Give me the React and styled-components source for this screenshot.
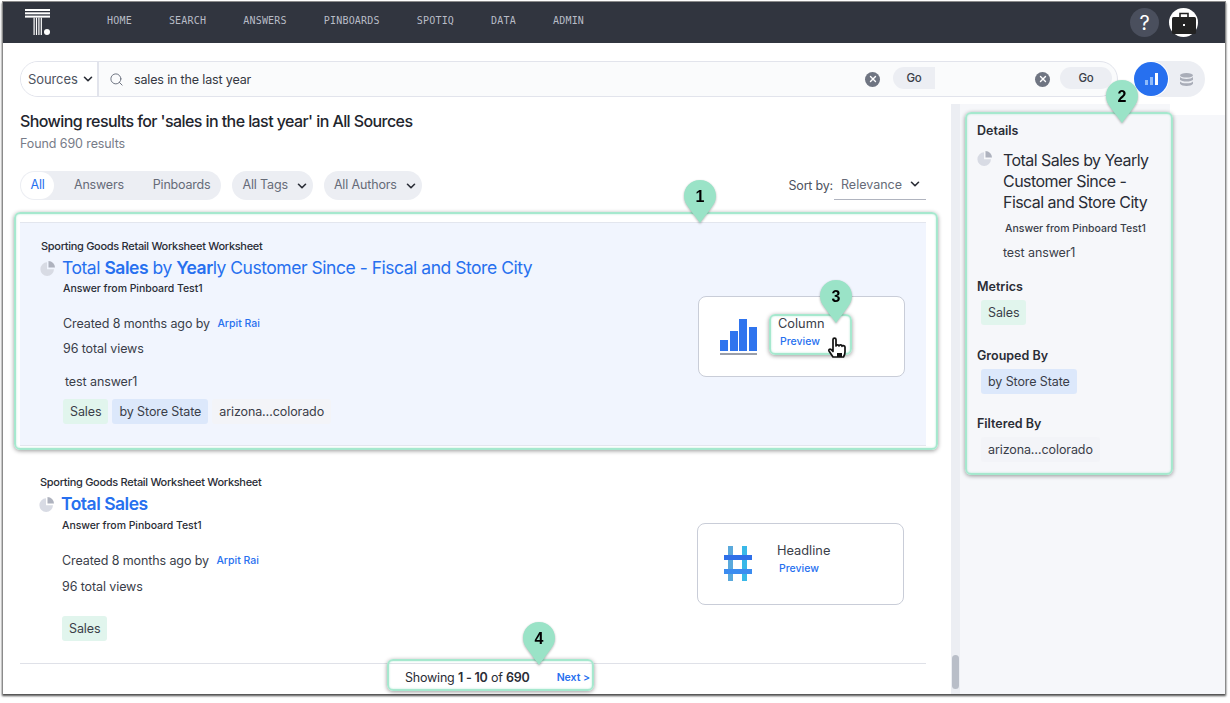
import React from "react";
import styled, { createGlobalStyle } from "styled-components";
import { ChevronDown, Search, X } from "lucide-react";

const Global = createGlobalStyle`
  html, body { margin: 0; padding: 0; background: #fff; }
  body { font-family: Inter, "Noto Sans", sans-serif; color: #2a2d36; }
  * { box-sizing: border-box; }
`;

const Page = styled.div`position: relative; width: 1230px; height: 703px; overflow: hidden; background: #fff; padding: 1px 0 0 2px;`;
const Frame = styled.div`
  width: 1224px; height: 693px; border: 1px solid #8b8b8b; border-bottom: 0; background: #fff;
  box-shadow: 0 2px 2px rgba(0,0,0,.7); display: flex; flex-direction: column; overflow: hidden;
`;
const Nav = styled.nav`height: 41px; flex: none; background: #31353f; display: flex; align-items: center; padding: 0 27px 0 22px;`;
const NavList = styled.div`display: flex; gap: 37px; margin-left: 55px; flex: 1;`;
const NavItem = styled.span`font: 10px "DejaVu Sans Mono", monospace; letter-spacing: .2px; color: #b8bcc6; position: relative; top: -2px;`;
const LogoBox = styled.div`display: flex;`;
const HelpBtn = styled.div`width: 29px; height: 29px; border-radius: 50%; background: #4a4f5d; color: #fff; display: flex; align-items: center; justify-content: center; font-size: 20px; font-weight: 400; margin-right: 10px;`;
const Avatar = styled.div`width: 29px; height: 29px; border-radius: 50%; background: #fff; display: flex; align-items: center; justify-content: center;`;

const SearchRow = styled.div`height: 61px; flex: none; padding: 18px 20px 7px 17px; display: flex; gap: 16px;`;
const SearchBar = styled.div`width: 1098px; height: 36px; border: 1px solid #e2e4ec; border-radius: 18px; display: flex; overflow: hidden; background: #fafbfc;`;
const Sources = styled.div`width: 78px; background: #fff; border-right: 2px solid #e2e4ec; display: flex; align-items: center; gap: 3px; padding-left: 7px; font-size: 13px; letter-spacing: -.1px; color: #4d5260; flex: none; svg { color: #2a2d36; }`;
const SearchText = styled.div`flex: 1; display: flex; align-items: center; padding-left: 10px; gap: 10px; font-size: 12.5px; color: #343842; letter-spacing: -.15px;`;
const Grow = styled.span`flex: 1;`;
const Clear = styled.span`width: 15px; height: 15px; border-radius: 50%; background: #6f7582; display: flex; align-items: center; justify-content: center; flex: none;`;
const GoBtn = styled.span`width: ${p => p.$w}px; height: 22px; background: #eceef3; border-radius: ${p => p.$cut ? "11px 0 0 11px" : "11px"}; display: flex; align-items: center; justify-content: center; font-size: 11.5px; font-weight: 500; color: #3a3e49; margin-left: ${p => p.$ml}px; margin-right: ${p => p.$mr}px; flex: none; position: relative; top: -1px;`;
const Toggle = styled.div`width: 71px; height: 36px; border-radius: 18px; background: #eceef3; display: flex; align-items: center;`;
const ToggleOn = styled.div`width: 34px; height: 34px; border-radius: 50%; background: #2770ef; display: flex; align-items: center; justify-content: center; box-shadow: 0 0 0 1px #fff;`;
const ToggleOff = styled.div`flex: 1; display: flex; justify-content: center;`;

const Body = styled.div`flex: 1; display: flex; min-height: 0;`;
const Main = styled.main`width: 948px; flex: none; padding: 6px 25px 0 17px; display: flex; flex-direction: column;`;
const Heading = styled.h1`margin: 0; font-size: 16px; line-height: 22px; font-weight: 500; color: #22252d; letter-spacing: -.58px;`;
const Found = styled.div`margin-top: 3px; font-size: 12.5px; line-height: 18px; color: #777c88; letter-spacing: -.1px;`;
const FilterRow = styled.div`margin-top: 18px; height: 29px; display: flex; align-items: center; gap: 11px;`;
const Segment = styled.div`height: 29px; background: #eceef3; border-radius: 15px; display: flex; align-items: center; padding: 0 11px 0 1px; color: #666b78; font-size: 12.5px; letter-spacing: -.2px;`;
const SegOn = styled.span`width: 33px; height: 27px; border-radius: 14px; background: #fff; color: #2770ef; display: flex; align-items: center; justify-content: center; margin-right: 20px; padding-bottom: 2px;`;
const SegItem = styled.span`margin-right: ${p => p.$mr || 0}px; padding-bottom: 2px;`;
const Drop = styled.div`height: 29px; background: #eceef3; border-radius: 15px; display: flex; align-items: center; gap: 7px; padding: 0 4px 0 10px; color: #666b78; font-size: 12.5px; letter-spacing: -.15px; span { padding-bottom: 2px; } svg { color: #2a2d36; }`;
const Sort = styled.div`margin-left: auto; display: flex; align-items: center; font-size: 12.5px; letter-spacing: -.2px; color: #4d5260; height: 29px;`;
const SortSelect = styled.div`width: 92px; height: 29px; margin-left: 1px; border-bottom: 1px solid #b0b4bf; display: flex; align-items: center; justify-content: space-between; padding: 0 4px 2px 7px; color: #666b78; letter-spacing: 0; svg { color: #2a2d36; }`;

const Card = styled.section`
  height: ${p => p.$h}px; margin-top: ${p => p.$mt || 0}px; position: relative; display: flex; justify-content: space-between;
  background: ${p => p.$active ? "#f1f5fe" : "#fff"};
  border-top: ${p => p.$active ? "1px solid #e3e6ee" : "0"};
  border-bottom: 1px solid ${p => p.$active ? "#e3e6ee" : "#dfe1e8"};
  padding: ${p => p.$pad};
`;
const CardText = styled.div`display: flex; flex-direction: column; align-items: flex-start;`;
const SourceName = styled.div`font-size: 11px; line-height: 14px; font-weight: 500; color: #2a2d36; letter-spacing: -.3px;`;
const TitleRow = styled.div`display: flex; align-items: center; gap: 6px; margin: 2px 0 0 -1px; line-height: 26px;`;
const Title = styled.a`font-size: 17.5px; color: #2770ef; letter-spacing: -.47px; b { font-weight: 600; }`;
const StrongTitle = styled(Title)`letter-spacing: -.5px;`;
const SubTitle = styled.div`font-size: 10.5px; line-height: 14px; font-weight: 500; margin: ${p => p.$mt}px 0 0 22px; color: #2a2d36; letter-spacing: -.05px;`;
const Meta = styled.div`font-size: 12.5px; line-height: 18px; margin: ${p => p.$mt}px 0 0 ${p => p.$ml ?? 22}px; color: #3a3e49; letter-spacing: -.1px; display: flex; align-items: center; white-space: pre;`;
const Author = styled.a`font-size: 10.5px; font-weight: 500; color: #2770ef; margin-left: 4px; letter-spacing: 0;`;
const Chips = styled.div`display: flex; gap: 4px; margin: ${p => p.$mt}px 0 0 22px;`;
const Chip = styled.span`
  height: 25px; display: inline-flex; align-items: center; padding: 0 7px; border-radius: 3px; font-size: 12.5px; letter-spacing: -.1px; color: #3a3e49;
  background: ${p => ({ green: "#e1f5ed", blue: "#dce8fb", gray: "#f3f4f8" }[p.$kind])};
`;
const Preview = styled.div`width: 207px; height: ${p => p.$h}px; margin-top: ${p => p.$mt}px; background: #fff; border: 1px solid #c9cdd8; border-radius: 8px; display: flex; padding-left: 21px;`;
const PreviewIcon = styled.div`width: 58px; flex: none; padding: ${p => p.$pt}px 0 0 ${p => p.$pl || 0}px;`;
const PreviewText = styled.div`padding-top: ${p => p.$pt}px;`;
const PreviewName = styled.div`font-size: 12.8px; line-height: 18px; color: #3a3e49;`;
const PreviewLink = styled.a`display: block; font-size: 10.5px; font-weight: 500; line-height: 14px; margin: 2px 0 0 2px; color: #2770ef;`;
const Pagination = styled.div`height: 27px; display: flex; align-items: center; padding-left: 385px; font-size: 12.5px; letter-spacing: -.2px; color: #2a2d36; b { font-weight: 600; }`;
const Next = styled.a`font-size: 10.5px; font-weight: 600; color: #2770ef; margin-left: 27px; letter-spacing: 0;`;

const Track = styled.div`width: 9px; flex: none; background: #eceef3; display: flex; flex-direction: column; justify-content: flex-end; padding: 0 1px 5px;`;
const Thumb = styled.div`height: 34px; background: #b9bec8; border-radius: 4px;`;
const Side = styled.aside`flex: 1; background: linear-gradient(#fff, #fff) right top / 55px 11px no-repeat, #f6f7fa; padding: 18px 0 0 17px;`;
const SideLabel = styled.div`font-size: 12.5px; line-height: 18px; font-weight: 600; color: #2a2d36; margin-top: ${p => p.$mt || 0}px;`;
const SideTitleRow = styled.div`display: flex; margin-top: 10px;`;
const SideTitle = styled.div`width: 155px; margin-left: 10px; font-size: 16px; line-height: 21px; color: #2a2d36; letter-spacing: -.55px;`;
const SideSub = styled.div`font-size: 10.5px; line-height: 14px; font-weight: 500; margin: 9px 0 0 28px; color: #3a3e49;`;
const SideDesc = styled.div`font-size: 12.5px; line-height: 18px; letter-spacing: -.1px; margin: 8px 0 0 26px; color: #3a3e49;`;
const SideChip = styled.div`margin: 4px 0 0 4px;`;

const Highlight = styled.div`
  position: absolute; left: ${p => p.$x}px; top: ${p => p.$y}px; width: ${p => p.$w}px; height: ${p => p.$h}px;
  border: 2px solid #a6e8ce; border-radius: 6px; pointer-events: none;
  box-shadow: 0 1px 4px rgba(0,0,0,.4), inset 0 0 2px rgba(154,227,199,.8);
`;
const PinWrap = styled.div`position: absolute; left: ${p => p.$x - 17}px; top: ${p => p.$y}px; width: 34px; height: 44px; filter: drop-shadow(0 1px 1px rgba(0,0,0,.3));`;
const PinNum = styled.span`position: absolute; left: 0; right: 0; top: 7px; text-align: center; font: 700 16px/20px "Liberation Sans", Arial, sans-serif; color: #000;`;
const Cursor = styled.div`position: absolute; left: 826px; top: 336px; width: 24px; height: 24px;`;

const Pin = ({ x, y, n }) => (
  <PinWrap $x={x} $y={y}>
    <svg width="34" height="44" viewBox="0 0 34 44"><path d="M17 0C7.6 0 1 7 1 16c0 4.5 1.8 8 4.5 11.5L17 43l11.5-15.5C31.2 24 33 20.5 33 16 33 7 26.400 0 17 0z" fill="#9ae3c7" /></svg>
    <PinNum>{n}</PinNum>
  </PinWrap>
);

const PieIcon = () => (
  <svg width="16" height="16" viewBox="0 0 16 16">
    <path d="M7 2.300A6.800 6.800 0 1 0 14 9.300H7z" fill="#d8dbe4" />
    <path d="M8.500 1v6.500H15A6.500 6.500 0 0 0 8.500 1z" fill="#aeb2be" />
  </svg>
);
const Chev = () => <ChevronDown size={14} strokeWidth={2.8} />;
const ClearBtn = () => <Clear><X size={10} color="#fff" strokeWidth={3.2} /></Clear>;

const Logo = () => (
  <svg width="27" height="27" viewBox="0 0 27 27" fill="#fff">
    <rect x="0" y="0" width="25" height="2" /><rect x="0" y="3.300" width="25" height="2" /><rect x="0" y="6.600" width="25" height="2" />
    <rect x="8.500" y="8.600" width="1.200" height="17.400" /><rect x="10.900" y="8.600" width="1.200" height="17.400" /><rect x="13.300" y="8.600" width="1.200" height="17.400" /><rect x="15.700" y="8.600" width="1.200" height="17.400" />
    <circle cx="22" cy="23" r="3" />
  </svg>
);
const Case = () => (
  <svg width="26" height="24" viewBox="0 0 26 24">
    <path d="M9 6V2.500h8V6" fill="none" stroke="#222" strokeWidth="1.600" />
    <rect x="1" y="6" width="24" height="17" rx="1.500" fill="#222" />
    <rect x="12" y="13" width="2" height="2" fill="#fff" />
  </svg>
);
const Bars = () => (
  <svg width="13" height="12" viewBox="0 0 13 12" fill="#8fbbfa">
    <rect x="0" y="7" width="3" height="5" /><rect x="5" y="4" width="3" height="8" /><rect x="10" y="0" width="3" height="12" fill="#fff" />
  </svg>
);
const Stack = () => (
  <svg width="13" height="13" viewBox="0 0 13 13" fill="#a9adb8">
    <ellipse cx="6.500" cy="2.300" rx="6.500" ry="2.300" />
    <path d="M0 4c1 1.300 3.500 1.900 6.500 1.900S12 5.300 13 4v2.700c-1 1.200-3.500 1.800-6.500 1.800S1 7.900 0 6.700z" />
    <path d="M0 8.400c1 1.300 3.500 1.900 6.500 1.900s5.500-.6 6.500-1.900v2.300C12 12 9.500 13 6.500 13S1 12 0 10.700z" />
  </svg>
);
const ColumnIcon = () => (
  <svg width="38" height="37" viewBox="0 0 38 37" fill="#2f74ee">
    <rect x="0" y="22" width="8" height="11" /><rect x="10" y="13" width="8" height="20" /><rect x="19" y="1" width="8" height="32" /><rect x="29" y="9" width="8" height="24" />
    <rect x="0" y="35" width="37" height="2" fill="#9a9ea9" />
  </svg>
);
const HashIcon = () => (
  <svg width="28" height="35" viewBox="0 0 28 35">
    <rect x="4" y="0" width="5" height="35" fill="#5aa9dc" /><rect x="18" y="0" width="5" height="35" fill="#39b8e8" />
    <rect x="0" y="9" width="28" height="5" fill="#2e6fe8" /><rect x="0" y="23" width="28" height="5" fill="#3b8cf0" />
  </svg>
);

const nav = ["HOME", "SEARCH", "ANSWERS", "PINBOARDS", "SPOTIQ", "DATA", "ADMIN"];

export default function App() {
  return (
    <Page>
      <Global />
      <Frame>
        <Nav>
          <LogoBox><Logo /></LogoBox>
          <NavList>{nav.map(n => <NavItem key={n}>{n}</NavItem>)}</NavList>
          <HelpBtn>?</HelpBtn>
          <Avatar><Case /></Avatar>
        </Nav>
        <SearchRow>
          <SearchBar>
            <Sources>Sources <Chev /></Sources>
            <SearchText>
              <Search size={15} color="#6f7582" strokeWidth={1.6} />
              sales in the last year
              <Grow />
              <ClearBtn />
              <GoBtn $w={42} $cut $ml={3} $mr={90}>Go</GoBtn>
              <ClearBtn />
              <GoBtn $w={52} $ml={0} $mr={5}>Go</GoBtn>
            </SearchText>
          </SearchBar>
          <Toggle>
            <ToggleOn><Bars /></ToggleOn>
            <ToggleOff><Stack /></ToggleOff>
          </Toggle>
        </SearchRow>
        <Body>
          <Main>
            <Heading>Showing results for 'sales in the last year' in All Sources</Heading>
            <Found>Found 690 results</Found>
            <FilterRow>
              <Segment>
                <SegOn>All</SegOn>
                <SegItem $mr={29}>Answers</SegItem>
                <SegItem>Pinboards</SegItem>
              </Segment>
              <Drop><span>All Tags</span> <Chev /></Drop>
              <Drop><span>All Authors</span> <Chev /></Drop>
              <Sort>
                Sort by:
                <SortSelect>Relevance <Chev /></SortSelect>
              </Sort>
            </FilterRow>
            <Card $active $h={224} $mt={22} $pad="16px 21px 0 21px">
              <CardText>
                <SourceName>Sporting Goods Retail Worksheet Worksheet</SourceName>
                <TitleRow>
                  <PieIcon />
                  <Title>Total <b>Sales</b> by <b>Year</b>ly Customer Since - Fiscal and Store City</Title>
                </TitleRow>
                <SubTitle $mt={1}>Answer from Pinboard Test1</SubTitle>
                <Meta $mt={19}>Created 8 months ago by <Author>Arpit Rai</Author></Meta>
                <Meta $mt={7}>96 total views</Meta>
                <Meta $mt={15} $ml={24}>test answer1</Meta>
                <Chips $mt={8}>
                  <Chip $kind="green">Sales</Chip>
                  <Chip $kind="blue">by Store State</Chip>
                  <Chip $kind="gray">arizona…colorado</Chip>
                </Chips>
              </CardText>
              <Preview $h={81} $mt={57}>
                <PreviewIcon $pt={21}><ColumnIcon /></PreviewIcon>
                <PreviewText $pt={18}>
                  <PreviewName>Column</PreviewName>
                  <PreviewLink>Preview</PreviewLink>
                </PreviewText>
              </Preview>
            </Card>
            <Card $h={218} $pad="29px 22px 0 20px">
              <CardText>
                <SourceName>Sporting Goods Retail Worksheet Worksheet</SourceName>
                <TitleRow>
                  <PieIcon />
                  <StrongTitle><b>Total Sales</b></StrongTitle>
                </TitleRow>
                <SubTitle $mt={2}>Answer from Pinboard Test1</SubTitle>
                <Meta $mt={19}>Created 8 months ago by <Author>Arpit Rai</Author></Meta>
                <Meta $mt={8}>96 total views</Meta>
                <Chips $mt={20}><Chip $kind="green">Sales</Chip></Chips>
              </CardText>
              <Preview $h={82} $mt={48}>
                <PreviewIcon $pt={22} $pl={5}><HashIcon /></PreviewIcon>
                <PreviewText $pt={18}>
                  <PreviewName>Headline</PreviewName>
                  <PreviewLink>Preview</PreviewLink>
                </PreviewText>
              </Preview>
            </Card>
            <Pagination>
              <span>Showing <b>1 - 10</b> of <b>690</b></span>
              <Next>Next &gt;</Next>
            </Pagination>
          </Main>
          <Track><Thumb /></Track>
          <Side>
            <SideLabel>Details</SideLabel>
            <SideTitleRow>
              <PieIcon />
              <SideTitle>Total Sales by Yearly Customer Since - Fiscal and Store City</SideTitle>
            </SideTitleRow>
            <SideSub>Answer from Pinboard Test1</SideSub>
            <SideDesc>test answer1</SideDesc>
            <SideLabel $mt={16}>Metrics</SideLabel>
            <SideChip><Chip $kind="green">Sales</Chip></SideChip>
            <SideLabel $mt={22}>Grouped By</SideLabel>
            <SideChip><Chip $kind="blue">by Store State</Chip></SideChip>
            <SideLabel $mt={21}>Filtered By</SideLabel>
            <SideChip><Chip $kind="gray">arizona…colorado</Chip></SideChip>
          </Side>
        </Body>
      </Frame>
      <Highlight $x={14} $y={212} $w={924} $h={238} />
      <Highlight $x={965} $y={112} $w={208} $h={363} />
      <Highlight $x={769} $y={314} $w={83} $h={41} />
      <Highlight $x={387} $y={659} $w={207} $h={32} />
      <Pin x={700} y={180} n="1" />
      <Pin x={1122} y={80} n="2" />
      <Pin x={836} y={280} n="3" />
      <Pin x={539} y={622} n="4" />
      <Cursor>
        <svg width="24" height="24" viewBox="0 0 24 24" fill="#fff" stroke="#111" strokeWidth="1.700" strokeLinejoin="round" strokeLinecap="round">
          <path d="M7 21l-4-6c-.8-1.300.8-2.600 2-1.500l2 2V3.500c0-1.900 3-1.900 3 0V10c0-1.600 3-1.600 3 0 0-1.500 3-1.500 3 .3 0-1.200 3-1 3 .7V16c0 2-.6 3.500-1.500 5z" />
          <rect x="11" y="17" width="5" height="4" fill="#111" stroke="none" />
        </svg>
      </Cursor>
    </Page>
  );
}
